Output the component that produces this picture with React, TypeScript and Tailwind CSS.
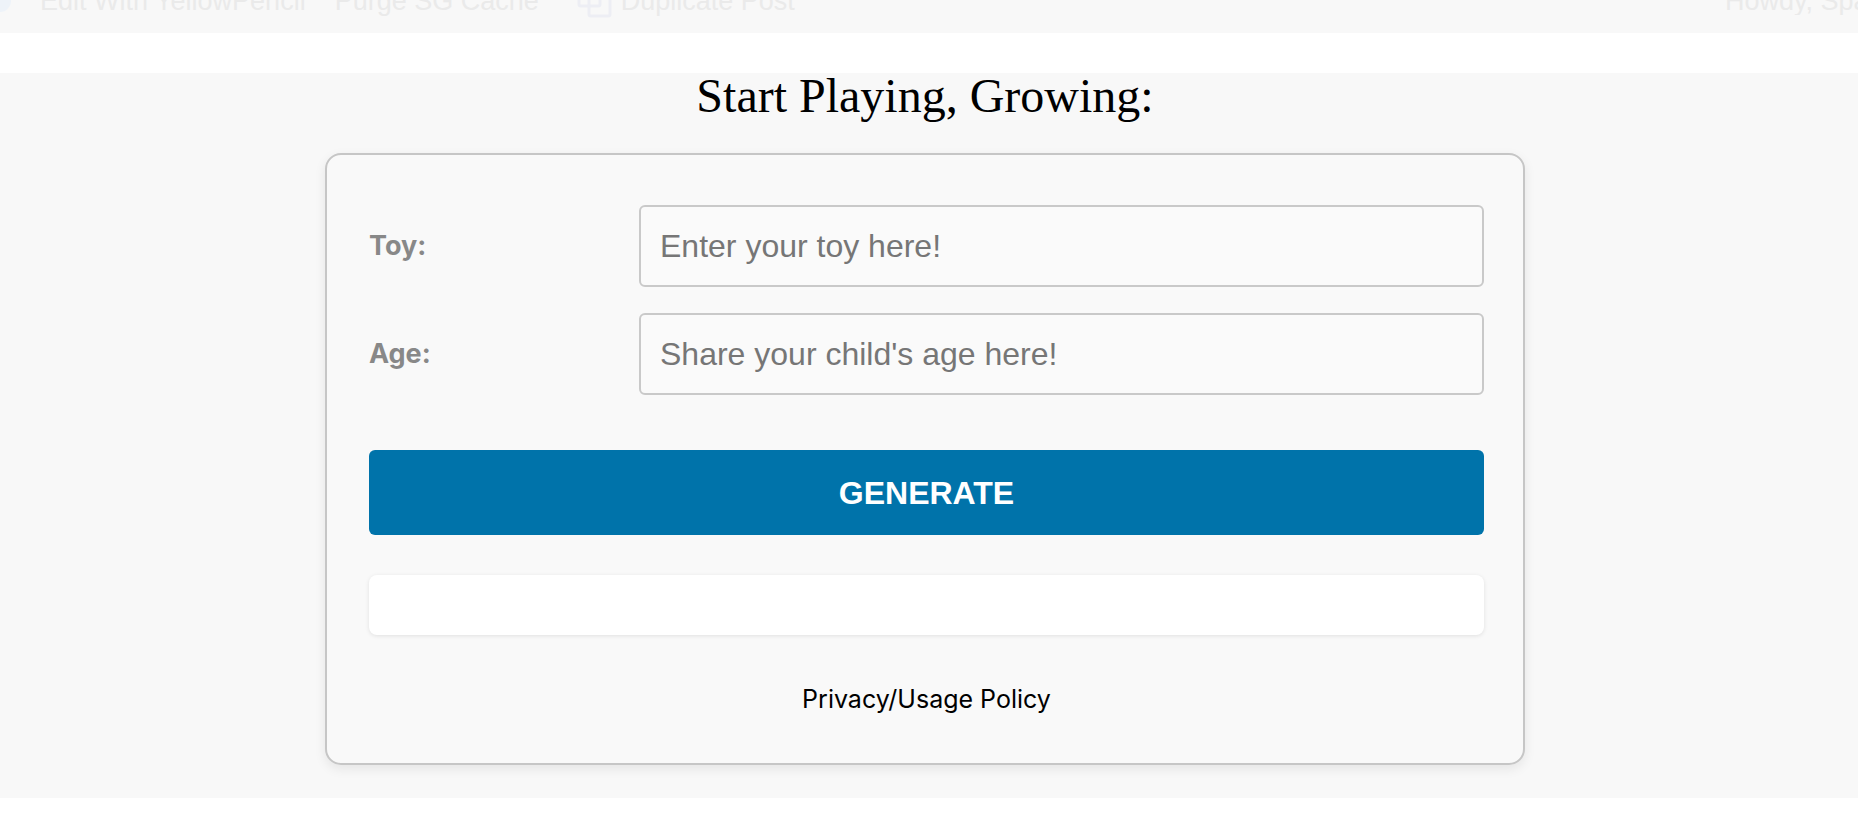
const AdminBar = () => {
  return (
    <div className="h-[33px] overflow-hidden bg-[#f8f8f8]">
      <div className="flex items-start text-[27px] leading-none text-[#eaeaea]" style={{ fontFamily: '"Liberation Sans", Arial, sans-serif' }}>
        <span className="h-[12px] w-[11px] rounded-br-full bg-[#eef3f9]" />
        <span className="-mt-[12px] ml-[29px] whitespace-nowrap">Edit With YellowPencil</span>
        <span className="-mt-[12px] ml-[29px] whitespace-nowrap">Purge SG Cache</span>
        <svg className="-mt-[21px] ml-[38px]" width="36" height="40" viewBox="0 0 36 40" fill="none">
          <rect x="2" y="6" width="21" height="21" rx="2" stroke="#edeef4" strokeWidth="3" />
          <rect x="12" y="16" width="21" height="21" rx="2" stroke="#edeef4" strokeWidth="3" />
        </svg>
        <span className="-mt-[12px] ml-[8px] whitespace-nowrap">Duplicate Post</span>
        <span className="-mt-[12px] ml-auto w-[133px] overflow-hidden whitespace-nowrap">Howdy, Spark</span>
      </div>
    </div>
  );
};

const FieldRow = ({ label, placeholder }: { label: string; placeholder: string }) => {
  return (
    <div className="flex items-center">
      <label
        className="w-[270px] shrink-0 text-[27px] font-bold text-[#888888]"
        style={{ fontFamily: 'Inter, "Noto Sans", sans-serif' }}
      >
        {label}
      </label>
      <input
        type="text"
        placeholder={placeholder}
        className="h-[82px] flex-1 rounded-[6px] border-2 border-[#c9c9c9] bg-[#fafafa] px-[19px] text-[32px] text-[#333] outline-none placeholder:text-[#767676]"
        style={{ fontFamily: '"Liberation Sans", Arial, sans-serif' }}
      />
    </div>
  );
};

const App = () => {
  return (
    <div className="min-h-[822px] bg-white">
      <AdminBar />
      <div className="h-[40px] bg-white" />

      <main className="flex h-[725px] flex-col items-center bg-[#f8f8f8] pr-[8px]">
        <h1
          className="-mt-[1px] text-[48px] leading-none text-black"
          style={{ fontFamily: '"Liberation Serif", "Times New Roman", serif' }}
        >
          Start Playing, Growing:
        </h1>

        <div className="mt-[33px] w-[1200px] rounded-[16px] border-2 border-[#c6c6c6] bg-[#f9f9f9] pb-[46px] pl-[42px] pr-[39px] pt-[50px] shadow-[0_4px_12px_rgba(0,0,0,0.08)]">
          {/* Campos */}
          <div className="flex flex-col gap-[26px]">
            <FieldRow label="Toy:" placeholder="Enter your toy here!" />
            <FieldRow label="Age:" placeholder="Share your child's age here!" />
          </div>

          <button
            type="button"
            className="mt-[55px] flex h-[85px] w-full items-center justify-center rounded-[6px] bg-[#0073aa] text-[32px] font-bold text-white"
            style={{ fontFamily: '"Liberation Sans", Arial, sans-serif' }}
          >
            GENERATE
          </button>

          {/* Resultado */}
          <div className="mt-[40px] h-[60px] rounded-[8px] bg-white shadow-[0_1px_4px_rgba(0,0,0,0.1)]" />

          <div
            className="mt-[46px] text-center text-[25px] leading-[36px] text-black"
            style={{ fontFamily: 'Inter, "Noto Sans", sans-serif' }}
          >
            Privacy/Usage Policy
          </div>
        </div>
      </main>
    </div>
  );
};

export default App;
